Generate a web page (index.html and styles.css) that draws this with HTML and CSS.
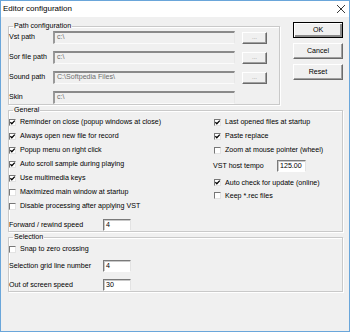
FILE: index.html
```html
<!DOCTYPE html>
<html>
<head>
<meta charset="utf-8">
<link rel="stylesheet" href="styles.css">
</head>
<body>
<div class="window">
  <div class="titlebar">
    <span class="title">Editor configuration</span>
    <svg class="close" width="10" height="10" viewBox="0 0 10 10"><path d="M1 1 L9 9 M9 1 L1 9" stroke="#222" stroke-width="0.9" fill="none"/></svg>
  </div>
  <div class="client">
    <div class="toprow">
      <fieldset class="group path">
        <legend>Path configuration</legend>
        <div class="prow"><span class="plabel">Vst path</span><span class="pinput">c:\</span><span class="btn small">...</span></div>
        <div class="prow"><span class="plabel">Sor file path</span><span class="pinput">c:\</span><span class="btn small">...</span></div>
        <div class="prow"><span class="plabel">Sound path</span><span class="pinput">C:\Softpedia Files\</span><span class="btn small">...</span></div>
        <div class="prow"><span class="plabel">Skin</span><span class="pinput">c:\</span></div>
      </fieldset>
      <div class="btncol">
        <span class="btn big default">OK</span>
        <span class="btn big">Cancel</span>
        <span class="btn big">Reset</span>
      </div>
    </div>

    <fieldset class="group general">
      <legend>General</legend>
      <div class="cols">
        <div class="col left">
          <div class="row"><span class="cb on"></span>Reminder on close (popup windows at close)</div>
          <div class="row"><span class="cb on"></span>Always open new file for record</div>
          <div class="row"><span class="cb on"></span>Popup menu on right click</div>
          <div class="row"><span class="cb on"></span>Auto scroll sample during playing</div>
          <div class="row"><span class="cb on"></span>Use multimedia keys</div>
          <div class="row"><span class="cb"></span>Maximized main window at startup</div>
          <div class="row"><span class="cb"></span>Disable processing after applying VST</div>
          <div class="row field fwd"><span class="flabel">Forward / rewind speed</span><span class="input">4</span></div>
        </div>
        <div class="col right">
          <div class="row"><span class="cb on"></span>Last opened files at startup</div>
          <div class="row"><span class="cb on"></span>Paste replace</div>
          <div class="row"><span class="cb"></span>Zoom at mouse pointer (wheel)</div>
          <div class="row tempo"><span class="tlabel">VST host tempo</span><span class="input tin">125.00</span></div>
          <div class="row r13 autochk"><span class="cb on"></span>Auto check for update (online)</div>
          <div class="row r13"><span class="cb"></span>Keep *.rec files</div>
        </div>
      </div>
    </fieldset>

    <fieldset class="group selection">
      <legend>Selection</legend>
      <div class="row"><span class="cb"></span>Snap to zero crossing</div>
      <div class="row field grid"><span class="flabel">Selection grid line number</span><span class="input">4</span></div>
      <div class="row field oos"><span class="flabel">Out of screen speed</span><span class="input">30</span></div>
    </fieldset>
  </div>
</div>
</body>
</html>
```

FILE: styles.css
```css
* { box-sizing: border-box; }
html, body { margin: 0; padding: 0; background: #f0f0f0; }
body {
  font-family: "Liberation Sans", Arial, sans-serif;
  font-size: 7.1px;
  color: #000;
}
.window {
  width: 350px;
  height: 332px;
  border: 1px solid #6aa6da;
  display: flex;
  flex-direction: column;
  background: #f0f0f0;
}
.titlebar {
  height: 16px;
  background: #fff;
  display: flex;
  align-items: center;
  justify-content: space-between;
  padding: 0 3px 0 2px;
  font-size: 8px;
}
.title { line-height: 16px; }
.close { display: block; }
.client {
  flex: 1;
  padding: 4px 0 0 7px;
}
.toprow {
  display: flex;
  align-items: flex-start;
  gap: 13px;
}
fieldset.group {
  margin: 0;
  padding: 0;
  border: 1px solid #c9c9c9;
  box-shadow: inset 1px 1px 0 #fff, 1px 1px 0 #fff;
  min-width: 0;
}
fieldset.group legend {
  padding: 0 1px;
  margin-left: 4px;
  line-height: 10px;
  height: 10px;
}
.path {
  width: 272px;
  padding: 6px 6px 2px 5px;
}
.prow {
  display: flex;
  align-items: flex-start;
  height: 13px;
  margin-bottom: 7px;
}
.prow:last-child { margin-bottom: 0; }
.plabel {
  width: 44px;
  line-height: 13px;
}
.pinput {
  width: 182px;
  height: 13px;
  border-style: solid;
  border-width: 2px 1px 1px 2px;
  border-color: #8a8a8a #e8e8e8 #fbfbfb #9a9a9a;
  background: #f0f0f0;
  color: #6d6d6d;
  padding-left: 2px;
  line-height: 9px;
}
.btn {
  display: flex;
  align-items: center;
  justify-content: center;
  background: #f0f0f0;
  border: 1px solid;
  border-color: #fff #6b6b6b #6b6b6b #fff;
  box-shadow: inset -1px -1px 0 #a0a0a0;
}
.btn.small {
  width: 25px;
  height: 12px;
  margin-left: 7px;
  margin-top: 1px;
  color: #8a8a8a;
  font-size: 6px;
  line-height: 6px;
  padding-bottom: 2px;
}
.btncol {
  display: flex;
  flex-direction: column;
  gap: 5px;
  margin-top: 1px;
}
.btn.big {
  width: 50px;
  height: 16px;
  line-height: 14px;
}
.btn.default {
  border-color: #000;
  box-shadow: inset 1px 1px 0 #fff, inset -2px -2px 0 #8a8a8a;
}
.general {
  width: 335px;
  margin-top: 3px;
  padding: 5px 0 4px 7px;
}
.cols { display: flex; }
.col.left { width: 205px; }
.row {
  display: flex;
  align-items: center;
  height: 14px;
  white-space: nowrap;
}
.r13 { height: 13px; }
.cb {
  width: 7px;
  height: 7px;
  flex: none;
  margin-right: 4px;
  background: #fff;
  border-style: solid;
  border-width: 1px;
  border-color: #777 #e3e3e3 #e3e3e3 #777;
  position: relative;
}
.cb.on::after {
  content: "";
  position: absolute;
  left: 0;
  top: 0;
  width: 5px;
  height: 5px;
  background: url("data:image/svg+xml,%3Csvg xmlns='http://www.w3.org/2000/svg' width='5' height='5' viewBox='0 0 5 5'%3E%3Cpath d='M0.3 2.2 L1.8 3.8 L4.8 0.6' stroke='%23000' stroke-width='1.3' fill='none'/%3E%3C/svg%3E") no-repeat;
}
.input {
  display: block;
  height: 12px;
  width: 28px;
  background: #fff;
  border-style: solid;
  border-width: 1px;
  border-color: #7a7a7a #e3e3e3 #fff #7a7a7a;
  box-shadow: inset 1px 1px 0 #c8c8c8;
  padding-left: 2px;
  line-height: 10px;
}
.field .flabel { width: 94px; }
.fwd { margin-top: 6px; height: 12px; }
.tempo { margin-top: 2px; }
.tlabel { width: 64px; margin-left: -1px; }
.tin { width: 29px; }
.autochk { margin-top: 3px; }
.selection {
  width: 335px;
  margin-top: 2px;
  padding: 1px 0 2px 7px;
}
.grid { margin-top: 4px; height: 12px; }
.oos { margin-top: 7px; height: 12px; }
```
